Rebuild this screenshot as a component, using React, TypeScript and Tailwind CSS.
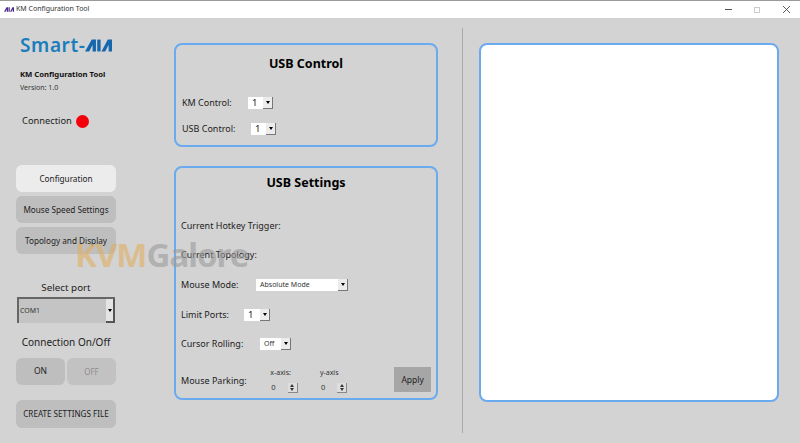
import type { ReactNode } from "react";

const font = { fontFamily: '"Noto Sans", "Open Sans", sans-serif' };

function Logo({ className }: { className: string }) {
  return (
    <svg viewBox="0 0 32 14" className={className} fill="currentColor">
      <path d="M0 14 L8 0 H13 V14 H9 V6 L5 14 Z" />
      <path d="M14.5 0 H18.5 V14 H14.5 Z" />
      <path d="M19.5 14 L27 0 H32 V14 H28 V6 L24 14 Z" />
    </svg>
  );
}

function SideButton({ children, active }: { children: ReactNode; active?: boolean }) {
  return (
    <button
      className={`h-[27px] w-[100px] rounded-[6px] pt-[1px] text-[8.2px] text-[#222] ${active ? "bg-[#ececec]" : "bg-[#bebebe]"}`}
    >
      {children}
    </button>
  );
}

function Combo({ value, width, small }: { value: string; width: string; small?: boolean }) {
  return (
    <div className={`flex h-[12px] items-center justify-between bg-white pl-[4px] ${width}`}>
      <span className={small ? "text-[7px] text-[#333]" : "text-[9.5px] text-[#222]"}>{value}</span>
      <span className="flex h-[12px] w-[10px] items-center justify-center border-r border-b border-[#777] bg-[#ececec]">
        <span className="border-x-[2px] border-t-[3px] border-x-transparent border-t-black" />
      </span>
    </div>
  );
}

function Spinner({ value }: { value: string }) {
  return (
    <div className="flex items-center gap-[12px]">
      <span className="text-[7.5px] text-[#333]">{value}</span>
      <span className="flex h-[10px] w-[10px] flex-col items-center justify-between border-r border-b border-[#888] bg-[#dedede]">
        <span className="mt-[1px] border-x-[2px] border-b-[3px] border-x-transparent border-b-[#333]" />
        <span className="mb-[1px] border-x-[2px] border-t-[3px] border-x-transparent border-t-[#333]" />
      </span>
    </div>
  );
}

export default function App() {
  return (
    <div className="relative flex h-[443px] w-[800px] flex-col overflow-hidden bg-[#d3d3d3]" style={font}>
      {/* title bar */}
      <div className="flex h-[18px] shrink-0 items-center border-t border-[#9a9a9a] bg-white pl-[4px]">
        <Logo className="h-[5px] w-[10px] text-[#4b2a8c]" />
        <span className="ml-[2px] text-[7px] text-[#333]">KM Configuration Tool</span>
        <div className="ml-auto flex items-center text-[#555]">
          <span className="h-px w-[7px] bg-[#555]" />
          <span className="ml-[22px] h-[6px] w-[6px] border border-[#ccc]" />
          <svg viewBox="0 0 8 8" className="mr-[10px] ml-[23px] h-[7px] w-[7px]" stroke="#444" strokeWidth="1">
            <path d="M0 0 L8 8 M8 0 L0 8" />
          </svg>
        </div>
      </div>

      <div className="flex flex-1">
        {/* sidebar */}
        <div className="flex w-[174px] shrink-0 flex-col pl-[16px]">
          <div className="mt-[15px] ml-[4px] flex h-[24px] items-center text-[#1a7dbd]">
            <span className="text-[19px] leading-none font-semibold tracking-[0.6px]">Smart-</span>
            <Logo className="h-[13px] w-[27px] text-[#1668ae]" />
          </div>
          <div className="mt-[11px] ml-[4px] text-[7.7px] leading-[12px] font-bold text-[#111]">KM Configuration Tool</div>
          <div className="mt-[2px] ml-[4px] text-[7px] leading-[12px] text-[#333]">Version: 1.0</div>
          <div className="mt-[19px] ml-[6px] flex items-center gap-[4px]">
            <span className="text-[9.3px] leading-[16px] text-[#222]">Connection</span>
            <span className="h-[13px] w-[13px] rounded-full bg-[#f4000a]" />
          </div>

          <div className="mt-[36px] flex flex-col gap-[4px]">
            <SideButton active>Configuration</SideButton>
            <SideButton>Mouse Speed Settings</SideButton>
            <SideButton>Topology and Display</SideButton>
          </div>

          <div className="mt-[26px] w-[100px] text-center text-[9.8px] leading-[16px] text-[#222]">Select port</div>
          <div className="mt-[1px] ml-[1px] flex h-[26px] w-[98px] items-center justify-between border-t-2 border-l-2 border-[#666] bg-[#c4c4c4] pl-[1px]">
            <span className="text-[7px] text-[#333]">COM1</span>
            <span className="flex h-full w-[9px] items-center justify-center border-r-2 border-b-2 border-[#555] bg-[#e4e4e4]">
              <span className="border-x-[2px] border-t-[3px] border-x-transparent border-t-black" />
            </span>
          </div>

          <div className="mt-[11px] w-[100px] text-center text-[10px] leading-[16px] text-[#222]">Connection On/Off</div>
          <div className="mt-[8px] flex w-[100px] gap-[2px]">
            <button className="h-[27px] w-[49px] rounded-[6px] bg-[#bebebe] text-[8.5px] text-[#222]">ON</button>
            <button className="h-[27px] w-[49px] rounded-[6px] bg-[#c2c2c2] text-[8px] text-[#8f8f8f]">OFF</button>
          </div>
          <button className="mt-[15px] h-[28px] w-[100px] rounded-[6px] bg-[#bebebe] text-[8.1px] text-[#222]">
            CREATE SETTINGS FILE
          </button>
        </div>

        {/* settings panels */}
        <div className="flex w-[264px] shrink-0 flex-col">
          <div className="mt-[25px] flex h-[104px] flex-col rounded-[8px] border-2 border-[#6aaaee] px-[6px]">
            <div className="mt-[10px] text-center text-[12.5px] leading-[18px] font-bold text-black">USB Control</div>
            <div className="mt-[23px] flex items-center text-[9px] leading-[14px] text-[#222]">
              <span className="w-[66px]">KM Control:</span>
              <Combo value="1" width="w-[25px]" />
            </div>
            <div className="mt-[12px] flex items-center text-[9px] leading-[14px] text-[#222]">
              <span className="w-[69px]">USB Control:</span>
              <Combo value="1" width="w-[25px]" />
            </div>
          </div>

          <div className="mt-[19px] flex h-[234px] flex-col rounded-[8px] border-2 border-[#6aaaee] pr-[5px] pl-[5px]">
            <div className="mt-[6px] text-center text-[12.5px] leading-[18px] font-bold text-black">USB Settings</div>
            <div className="mt-[27px] text-[9px] leading-[14px] text-[#222]">Current Hotkey Trigger:</div>
            <div className="mt-[15px] text-[9px] leading-[14px] text-[#222]">Current Topology:</div>
            <div className="mt-[16px] flex items-center text-[9px] leading-[14px] text-[#222]">
              <span className="w-[75px]">Mouse Mode:</span>
              <Combo value="Absolute Mode" width="w-[92px]" small />
            </div>
            <div className="mt-[16px] flex items-center text-[9px] leading-[14px] text-[#222]">
              <span className="w-[63px]">Limit Ports:</span>
              <Combo value="1" width="w-[26px]" />
            </div>
            <div className="mt-[15px] flex items-center text-[9px] leading-[14px] text-[#222]">
              <span className="w-[79px]">Cursor Rolling:</span>
              <Combo value="Off" width="w-[31px]" small />
            </div>
            <div className="mt-[17px] flex items-start text-[9px] text-[#222]">
              <span className="mt-[6px] w-[90px] leading-[14px]">Mouse Parking:</span>
              <div className="flex w-[50px] flex-col">
                <span className="text-[7px] leading-[10px] text-[#333]">x-axis:</span>
                <div className="mt-[4px] ml-[1px]"><Spinner value="0" /></div>
              </div>
              <div className="flex w-[75px] flex-col">
                <span className="text-[7px] leading-[10px] text-[#333]">y-axis</span>
                <div className="mt-[4px] ml-[1px]"><Spinner value="0" /></div>
              </div>
              <button className="-mt-[1px] h-[25px] w-[37px] bg-[#a6a6a6] pt-[1px] text-[8.5px] text-[#222]">Apply</button>
            </div>
          </div>
        </div>

        {/* divider */}
        <div className="mt-[10px] mb-[10px] ml-[24px] w-px bg-[#a9a9a9]" />

        {/* output area */}
        <div className="mt-[25px] ml-[16px] h-[359px] w-[300px] rounded-[8px] border-2 border-[#6aaaee] bg-white" />
      </div>

      {/* watermark */}
      <div className="pointer-events-none absolute top-[232px] left-[75px] text-[33px] leading-[46px] font-bold tracking-[-1px] opacity-60">
        <span className="text-[#e0b063]">KVM</span>
        <span className="text-[#9c9c9c]">Galore</span>
      </div>
    </div>
  );
}
